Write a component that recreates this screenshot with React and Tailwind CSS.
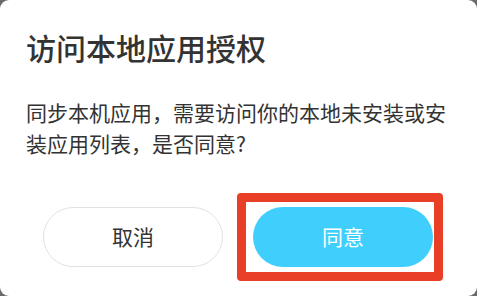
export default function App() {
  return (
    <div className="w-[477px] h-[296px] bg-[#6b6b6b] overflow-hidden">
      <div
        className="w-full h-full bg-white rounded-[9px] flex flex-col px-[26px] text-[#333333]"
        style={{ fontFamily: '"Noto Sans CJK SC", "Noto Sans", sans-serif' }}
      >
        {/* Title */}
        <h1 className="pt-[27px] text-[30px] leading-[40px] font-medium">访问本地应用授权</h1>

        {/* Message */}
        <p className="mt-[30px] text-[21px] leading-[31px]">
          同步本机应用，需要访问你的本地未安装或安装应用列表，是否同意?
        </p>

        {/* Actions */}
        <div className="mt-[48px] flex gap-[30px] px-[17px]">
          <button
            type="button"
            className="w-[180px] h-[60px] rounded-full border border-[#e2e2e2] bg-white text-[21px] text-[#333333]"
          >
            取消
          </button>
          <div className="relative">
            <span className="absolute -left-[16px] -right-[10px] -top-[14px] -bottom-[14px] border-[9px] border-[#e93f27] rounded-[4px]" />
            <button
              type="button"
              className="relative w-[180px] h-[60px] rounded-full bg-[#40cffd] text-[21px] text-white"
            >
              同意
            </button>
          </div>
        </div>
      </div>
    </div>
  )
}
